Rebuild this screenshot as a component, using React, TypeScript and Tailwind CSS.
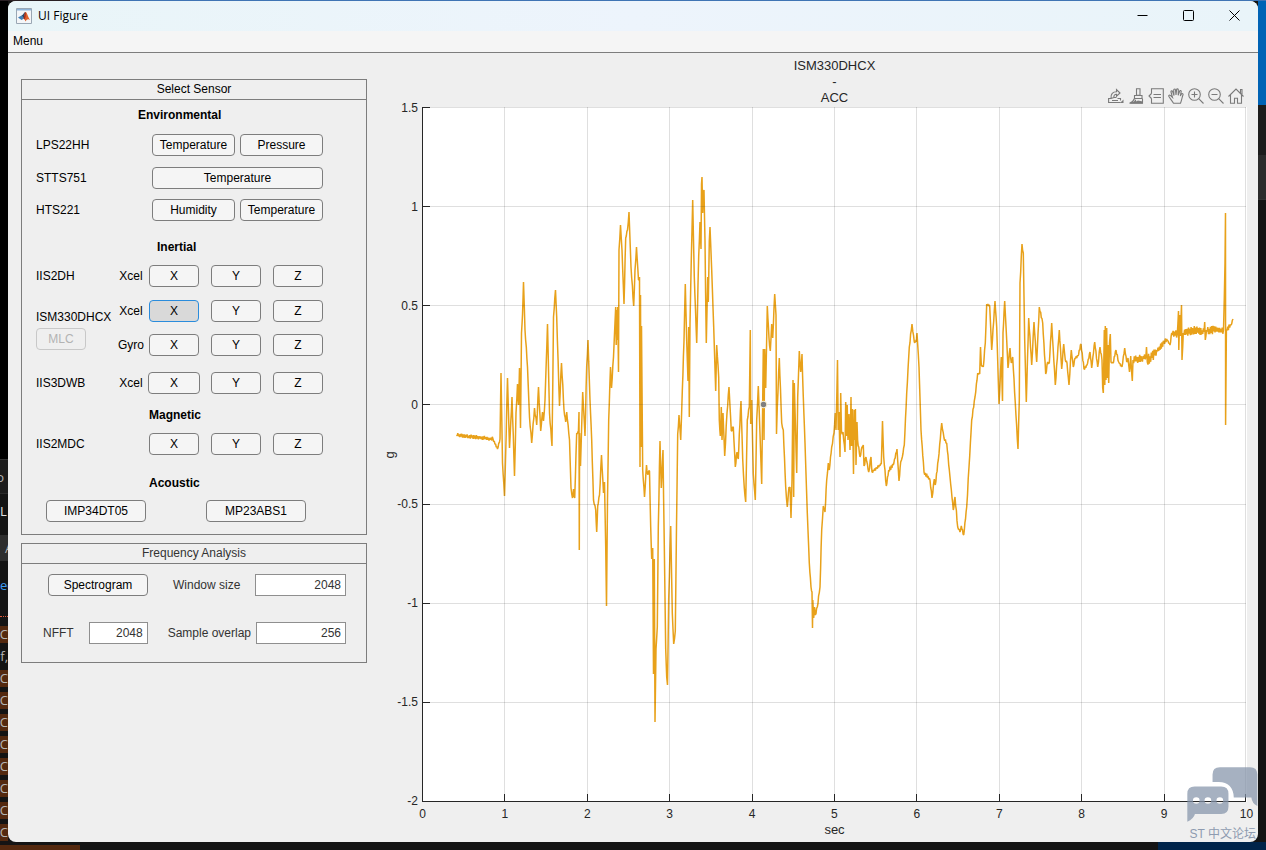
import React, { FC, ReactNode, useState } from 'react'

// [x, y, jitter?] in plot units, jitter sets how noisy the line up to that point is
const SIGNAL: number[][] = [
  [456.5, 435], [493, 439, 2], [497.5, 449], [500, 439], [501, 373], [502.5, 463], [504.5, 496], [505.5, 460],
  [507.5, 378], [509.5, 448], [512, 397], [514.5, 476], [516, 413], [517.5, 384], [518.5, 405], [519.5, 368],
  [520.5, 428], [521.5, 333], [522.5, 315], [523.5, 282], [525, 330], [527.5, 367], [529.5, 417], [531.7, 443],
  [534.5, 408], [536.7, 425], [538.5, 387], [540.7, 431], [542.5, 412], [543.5, 421], [545, 400], [547.5, 324],
  [549.5, 413], [552, 446], [553.5, 317], [555.5, 290], [556.7, 317], [559.5, 406], [561.5, 363], [564, 410],
  [565.7, 422], [566.7, 412], [569.5, 440], [571, 488], [572.5, 498], [573.5, 489], [574.7, 498], [576.7, 433],
  [578.4, 432], [579, 412], [579.3, 550], [579.6, 433], [580.5, 466], [582.7, 392], [585, 436], [586.7, 366],
  [588, 340], [590, 400], [591.7, 440], [593.5, 500], [595.7, 510], [596.7, 532], [597.7, 506], [599.5, 495],
  [601.5, 455], [603.5, 493], [604.5, 482], [605.7, 546], [606.5, 606], [607.5, 500], [608.7, 420], [610.5, 367],
  [611.5, 388], [613.5, 357], [615.7, 307], [616.2, 345], [616.7, 310], [617.2, 340], [617.7, 307], [618.5, 372],
  [619, 250], [620.5, 225], [622, 250], [624, 304], [625.7, 238], [627.5, 230], [629, 212], [631, 267],
  [633.7, 306], [635, 270], [636.5, 247], [638.5, 280], [639.5, 277], [640, 467], [640.5, 295], [641, 447],
  [641.5, 326], [642.7, 470], [644.5, 497], [646.5, 465], [647.5, 474], [649.5, 471], [650.7, 527], [651.7, 559],
  [652.7, 548], [653.5, 674], [654.3, 559], [655, 722], [656, 649], [657.3, 627], [658.3, 527], [660, 441],
  [661.3, 488], [663, 450], [664.3, 545], [665.7, 649], [666.7, 677], [667.5, 685], [668.7, 599], [670.7, 526],
  [672.3, 613], [673.7, 644], [675.3, 631], [676.5, 527], [677.7, 434], [679, 415], [680.7, 440], [682.3, 391],
  [684, 341], [685.3, 284], [686.7, 341], [688, 381], [688.7, 327], [689.3, 417], [690, 324], [691.3, 259],
  [692.7, 200], [694.3, 277], [696.7, 343], [698.7, 256], [700, 222], [701, 249], [701.5, 184], [702, 177],
  [702.7, 213], [703.3, 192], [704, 190], [705, 241], [706.3, 343], [707.7, 277], [708.3, 302], [709.3, 241],
  [710, 227], [711.7, 270], [713.7, 327], [715.7, 391], [716.7, 345], [718.7, 377], [719.3, 420], [720.3, 436],
  [721.3, 407], [722, 440], [723, 413], [724.7, 456], [727, 413], [729, 387], [731.3, 431], [733.3, 427],
  [735.3, 467], [737, 452], [738.3, 459], [739.3, 434], [741, 401], [742.7, 459], [744.3, 488], [745.7, 502],
  [747.3, 420], [749.3, 407], [750.3, 330], [750.7, 424], [751.7, 400], [753.3, 474], [755.3, 500], [756.7, 420],
  [758.3, 386], [760, 434], [761.7, 484], [763.3, 349], [764, 440], [764.7, 349], [765.7, 388], [767.3, 306],
  [769, 338], [770.3, 351], [771.7, 324], [772.7, 338], [774.7, 294], [776, 315], [776.5, 434], [777.3, 407],
  [779.3, 358], [781.7, 423], [783.3, 430], [785.7, 487], [787.3, 507], [789, 487], [790, 487], [791, 518],
  [792, 480], [793, 380], [793.7, 497], [794.3, 383], [796.7, 473], [797.7, 397], [799.3, 351], [800.7, 372],
  [802, 354], [803.3, 397], [805, 443], [807.3, 513], [809.3, 563], [811, 587], [812, 592], [812.5, 628],
  [812.8, 600], [813.7, 618], [814.5, 607], [815.3, 615], [817.3, 607], [820, 587], [821.7, 530], [823.3, 506],
  [825, 512], [826.7, 480], [828.3, 463], [829.3, 470], [831.7, 447], [834, 433], [835.3, 413], [836, 430],
  [837.5, 360], [838.2, 430], [839, 412], [840, 457], [840.7, 393], [841.5, 432, 6], [843, 432, 6], [845, 452],
  [845.7, 402], [846.4, 436], [847.2, 405], [848, 440], [849, 414], [850, 450], [851, 397], [851.6, 446],
  [852.5, 409], [853.5, 474], [854.3, 410], [855, 440], [855.4, 409], [856, 465], [857, 422], [857.6, 440],
  [860, 457], [862, 447], [863.3, 445], [864, 466], [866, 457], [868.7, 472], [871, 457], [872, 472],
  [876.7, 468, 2], [881.3, 464, 2], [882.5, 421], [883.7, 457], [886.3, 486], [888.7, 470], [893.3, 465, 2], [897, 449],
  [899, 481], [900.7, 462], [902.3, 457], [904.3, 445], [906.7, 393], [909.3, 347], [912, 324], [914.3, 342],
  [916, 342], [917, 333], [919, 367], [921, 430], [924, 472], [930, 480, 2], [932, 498], [934.3, 479],
  [935.3, 485], [938.3, 460], [941.7, 423], [944, 438], [946.7, 443], [950, 477], [953.3, 510], [955, 497],
  [957.7, 527], [960, 532], [961.3, 526], [963.7, 535], [966.7, 507], [969, 467], [971.7, 420], [975, 397],
  [977.7, 373], [979.7, 374], [980.5, 347], [981.3, 365], [983.3, 367], [985.3, 343], [986.7, 304], [989.7, 306],
  [991.7, 350], [995, 301], [996.7, 327], [999, 404], [1001.3, 357], [1002.5, 401], [1003, 333], [1004.7, 301],
  [1006.7, 340], [1008, 368], [1010, 348], [1011.3, 363], [1012.7, 357], [1015.3, 403], [1018, 449], [1019.3, 400],
  [1020, 283], [1022, 244], [1023.3, 253], [1024.7, 340], [1026.3, 402], [1028.7, 318], [1031.7, 365], [1034, 322],
  [1036.7, 362], [1039.3, 307], [1042.7, 323], [1045.7, 374], [1047.7, 362], [1049.3, 363], [1051.7, 323], [1055.3, 385],
  [1059.3, 330], [1061.7, 369], [1063.7, 344], [1065.3, 360], [1067, 363], [1069, 385], [1071.3, 350], [1073.3, 367],
  [1075, 358], [1078, 356], [1081, 344], [1084, 369], [1087, 365], [1090, 352], [1091.7, 368], [1094.7, 342],
  [1097.7, 367], [1100, 347], [1102, 360], [1102.7, 388], [1103.3, 393], [1104.3, 330], [1104.8, 385], [1105.3, 326],
  [1106, 380], [1106.7, 328], [1107.3, 378], [1108, 345], [1108.7, 383], [1109.5, 343], [1110.3, 334], [1111, 362],
  [1113, 363], [1116, 350], [1118.7, 362], [1122, 367], [1124.7, 348], [1126.7, 362], [1128, 358], [1129.5, 372],
  [1130.7, 356], [1132.3, 381], [1133, 360], [1141.7, 359, 4], [1146, 355, 4], [1146.5, 347], [1147.3, 362], [1156.7, 350, 6],
  [1164, 343, 3], [1166.7, 339, 3], [1170, 345, 2], [1171.7, 333], [1177.3, 334, 4], [1178.5, 311], [1178.8, 350],
  [1179.7, 315], [1180.3, 336], [1181.5, 305], [1182, 360], [1183.3, 333], [1193, 330, 4], [1204, 332, 4],
  [1204.7, 322], [1205.3, 340], [1206.5, 330], [1223.5, 330, 4], [1225, 263], [1225.5, 213], [1225.6, 425],
  [1226.4, 330], [1231, 325, 3], [1233, 319],
]

const toPath = (samples: number[][]) => {
  let seed = 7
  const rand = () => {
    seed = (seed * 16807) % 2147483647
    return seed / 2147483647
  }
  const points: string[] = []
  samples.forEach(([x, y, jitter = 1.5], i) => {
    if (i > 0) {
      const [px, py] = samples[i - 1]
      const steps = Math.round((x - px) * 1.5)
      for (let s = 1; s < steps; s++) {
        const side = s % 2 ? 1 : -1
        const t = s / steps
        points.push(`${(px + (x - px) * t).toFixed(1)},${(py + (y - py) * t + side * jitter * (0.3 + rand() * 0.8)).toFixed(1)}`)
      }
    }
    points.push(`${x},${y}`)
  })
  return points.join(' ')
}

const X_TICKS = ['0', '1', '2', '3', '4', '5', '6', '7', '8', '9', '10']
const Y_TICKS = ['1.5', '1', '0.5', '0', '-0.5', '-1', '-1.5', '-2']
const CODE_ROWS = ['xC', 'uf,', 'xC', 'xC', 'xC', 'xC', 'xC', 'xC', 'xC', 'xC']

const xAt = (i: number) => Math.round(422 + i * 82.4) + 0.5
const yAt = (i: number) => Math.round(107 + i * 99.15) + 0.5

const Btn: FC<{ children: ReactNode; className?: string; active?: boolean; disabled?: boolean; onClick?: () => void; label?: string }> = ({
  children,
  className = 'w-[50px]',
  active,
  disabled,
  onClick,
  label,
}) => {
  const look = disabled
    ? 'border-[#c8c8c8] text-[#b3b3b3]'
    : active
      ? 'border-[#2a8cdc] bg-[#d9d9d9] text-black'
      : 'border-[#7d7d7d] bg-[#f5f5f5] text-black hover:bg-[#e6e6e6]'
  return (
    <button
      type="button"
      disabled={disabled}
      aria-pressed={active}
      aria-label={label}
      onClick={onClick}
      className={`flex h-[22px] shrink-0 items-center justify-center rounded border leading-4 ${look} ${className}`}
    >
      {children}
    </button>
  )
}

const Panel: FC<{ title: string; children: ReactNode; className?: string }> = ({ title, children, className = '' }) => (
  <section className={`border border-[#7d7d7d] ${className}`}>
    <h2 className="h-5 border-b border-[#7d7d7d] text-center leading-[18px]">{title}</h2>
    {children}
  </section>
)

const Row: FC<{ name: string; children: ReactNode; className?: string }> = ({ name, children, className = '' }) => (
  <div className={`flex items-center ${className}`}>
    <span className="w-[82px] shrink-0">{name}</span>
    {children}
  </div>
)

const Axes: FC<{ sensor: string; kind: string; wide?: boolean; selected: string; onSelect: (id: string) => void }> = ({
  sensor,
  kind,
  wide,
  selected,
  onSelect,
}) => (
  <div className="flex flex-1 items-center justify-between">
    <span className="w-[26px] text-center whitespace-nowrap">{kind}</span>
    <div className="flex gap-3">
      {['X', 'Y', 'Z'].map((axis) => {
        const id = `${sensor} ${kind} ${axis}`
        return (
          <Btn
            key={axis}
            label={id}
            active={selected === id}
            onClick={() => onSelect(id)}
            className={wide && axis === 'X' ? '-mx-px w-[52px]' : 'w-[50px]'}
          >
            {axis}
          </Btn>
        )
      })}
    </div>
  </div>
)

const Tool: FC<{ label: string; children: ReactNode }> = ({ label, children }) => (
  <button type="button" aria-label={label} className="text-[#7a7a7a] hover:text-black">
    <svg className="block h-4 w-4" viewBox="0 0 16 16" fill="none" stroke="currentColor" strokeWidth="1.1">
      {children}
    </svg>
  </button>
)

const Toolbar: FC = () => (
  <div className="absolute right-[3px] bottom-[3px] flex gap-1">
    <Tool label="Export">
      <path d="M3 10.500H.6v4h12M9.500 10.500h3v2" />
      <path d="M3 10.500C2.500 6 5 3.800 8.500 3.800V1.500l3.500 3.500-3.500 3.200V6.200C6.500 6.200 5.500 8 6 9.500h2.500M3 10.500 6 9.500M4 12.500h6" />
      <path d="M15.500 11.500v3.500H12z" fill="currentColor" stroke="none" />
    </Tool>
    <Tool label="Brush">
      <path d="M8.500.8h3.500v6.500H8.500zM6.500 7.500h7.500v3H6.500z" />
      <path d="M6.500 10.500c-1 2.500-2.500 4-5 4.700h13v-4.700" />
      <path d="M2.500 15c3 0 4-1.200 5-2.500l.5 2 2-1.500 4 1v1z" fill="currentColor" />
    </Tool>
    <Tool label="Data tips">
      <path d="M3.500 5.500V.8h11.800v14.500H3.500v-4.800M3.500 5.500 1 8l2.500 2.500" />
      <path d="M5.500 6.500h7.500M5.500 9.500h7.500" />
    </Tool>
    <Tool label="Pan">
      <path d="M5.500 15.300C4 12.500 2 10.500.8 8.300c-.4-1 .8-1.600 1.600-.9L4.500 9.500 3 4c-.3-1.200 1.200-1.600 1.600-.5L6 7.500 5.700 2c0-1.300 1.700-1.300 1.800 0L8 7l.6-5.300c.2-1.200 1.800-1 1.700.2L10.200 7.200l1.400-4c.4-1.100 1.800-.7 1.600.4l-.9 4.400 1.200-2c.6-.9 1.900-.3 1.500.7-1 2.800-1.300 5.800-2.500 8.600z" />
    </Tool>
    <Tool label="Zoom in">
      <circle cx="6.500" cy="6.500" r="5.800" />
      <path d="M10.700 10.700 15.500 15.500M3.500 6.500h6M6.500 3.500v6" />
    </Tool>
    <Tool label="Zoom out">
      <circle cx="6.500" cy="6.500" r="5.800" />
      <path d="M10.700 10.700 15.500 15.500M3.500 6.500h6" />
    </Tool>
    <Tool label="Restore view">
      <path d="M.5 8.500 8 1l7.500 7.500M12.500 5.500V1.500h1.500v5.500M2.500 7v8.300h4v-5h3v5h4V7" />
    </Tool>
  </div>
)

const Plot: FC = () => (
  <svg
    className="h-full w-full bg-white"
    viewBox="422 107 825 695"
    preserveAspectRatio="none"
    fill="none"
    role="img"
    aria-label="Acceleration over time"
  >
    <polyline points={toPath(SIGNAL)} stroke="#e8a11a" strokeWidth="1.5" strokeLinejoin="bevel" />
    <g stroke="#262626" strokeOpacity="0.15" shapeRendering="crispEdges">
      {X_TICKS.slice(1).map((t, i) => (
        <path key={t} d={`M${i === 9 ? 1245.5 : xAt(i + 1)} 107V801`} />
      ))}
      {Y_TICKS.slice(0, -1).map((t, i) => (
        <path key={t} d={`M423 ${yAt(i)}H1246`} />
      ))}
    </g>
    <g stroke="#262626" shapeRendering="crispEdges">
      <path d="M422.5 107V801.500H1246" />
      {X_TICKS.map((t, i) => (
        <path key={t} d={`M${i === 10 ? 1245.5 : xAt(i)} 794V801`} />
      ))}
      {Y_TICKS.map((t, i) => (
        <path key={t} d={`M422 ${yAt(i)}H430`} />
      ))}
    </g>
    <circle cx="763.500" cy="404.500" r="3.800" fill="#f7efd2" />
    <circle cx="763.500" cy="404.500" r="2.700" fill="#7f7f7f" />
  </svg>
)

const Watermark: FC = () => (
  <div className="pointer-events-none absolute right-0 bottom-0 flex flex-col items-end text-[#8e9bb0]">
    <svg className="h-[57px] w-[73px]" viewBox="105 75 220 170" fill="#8393a9" fillOpacity="0.72">
      <path d="M188 125v-22q0-22 22-22h91q22 0 22 22v95q-16-8-18-26h-53c0-30-18-47-45-47z" />
      <path
        fillRule="evenodd"
        d="M134 139h80q22 0 22 22v39q0 22-22 22h-79q-4 15-23 23v-84q0-22 22-22zM129 181a10 10 0 1 0 20 0 10 10 0 1 0-20 0zM164 181a10 10 0 1 0 20 0 10 10 0 1 0-20 0zM200 181a10 10 0 1 0 20 0 10 10 0 1 0-20 0z"
      />
    </svg>
    <span className="mt-1 pr-[2px] font-['Liberation_Sans','Noto_Sans_CJK_SC',sans-serif] text-xs leading-4 whitespace-nowrap">ST 中文论坛</span>
  </div>
)

const TitleBar: FC = () => (
  <header className="flex h-[30px] items-center bg-linear-to-r from-[#e9f5f8] via-[#edf4fc] to-[#e9f4f9] pl-2 font-['Open_Sans',sans-serif]">
    <svg className="h-4 w-4" viewBox="0 0 16 16">
      <path d="M.5.500h15v15H.500z" fill="#f4f6f8" stroke="#9aa7b4" />
      <path d="M1 1h14v1.500H1z" fill="#8fb4d8" />
      <path d="M2 9.500 5.500 7.500 8 10.500 5.500 12z" fill="#3f7fb8" />
      <path d="M5.500 7.500C7.500 7 8 4 9.500 4L8 10.500z" fill="#26466b" />
      <path d="M9.500 4C11 4 12 9 14 12c-2-1.500-3-1-4.500 1.500C9 12 8.500 11 7.500 10.500 8.500 9 8.500 4 9.500 4z" fill="#e0602a" />
      <path d="M9.500 4c.5 2 .3 6-1 7.500-.5-.5-.5-.8-1-1C8.500 9 8.500 4 9.500 4z" fill="#a02c1c" />
    </svg>
    <h1 className="ml-[6px] text-xs">UI Figure</h1>
    <div className="mr-px ml-auto flex self-start">
      <button type="button" aria-label="Minimize" className="flex h-7 w-[46px] items-center justify-center">
        <svg className="h-[11px] w-[11px]" viewBox="0 0 11 11" stroke="#000" fill="none"><path d="M.5 5.500h10" /></svg>
      </button>
      <button type="button" aria-label="Maximize" className="flex h-7 w-[46px] items-center justify-center">
        <svg className="h-[11px] w-[11px]" viewBox="0 0 11 11" stroke="#000" fill="none"><rect x=".5" y=".5" width="10" height="10" rx="1" /></svg>
      </button>
      <button type="button" aria-label="Close" className="flex h-7 w-[46px] items-center justify-center">
        <svg className="h-[11px] w-[11px]" viewBox="0 0 11 11" stroke="#000" fill="none"><path d="M.5.500l10 10M10.500.500l-10 10" /></svg>
      </button>
    </div>
  </header>
)

// Slice of the editor that sits behind the window
const EditorEdge: FC = () => (
  <div className="flex w-2 shrink-0 flex-col overflow-hidden bg-black font-['Open_Sans',sans-serif] text-[13px] text-[#b4b4b4]" aria-hidden="true">
    <div className="h-[458px] shrink-0" />
    <div className="flex h-[34px] shrink-0 items-center justify-end border-t border-[#333333] bg-[#1c1c1c] pr-1">o</div>
    <div className="flex h-[42px] shrink-0 items-center border-t border-[#2b2b2b] bg-[#141414] pb-2 text-[#e0e0e0]">L</div>
    <div className="flex h-[26px] shrink-0 items-center bg-[#2e2e2e] pl-[5px]">A</div>
    <div className="flex h-[48px] shrink-0 items-center bg-[#141414] text-[#3f9bf0]">ed</div>
    <div className="flex h-[14px] shrink-0 flex-col justify-center bg-[#141414]">
      <div className="border-t border-dotted border-[#e0583a]" />
    </div>
    <div className="flex-1 bg-[#141414]">
      {CODE_ROWS.map((code, i) => (
        <div key={i} className="flex h-[22px] items-center">
          <span className={`flex h-[17px] w-2 items-center justify-end ${code === 'xC' ? 'bg-[#54290f]' : ''}`}>{code}</span>
        </div>
      ))}
    </div>
  </div>
)

const App: FC = () => {
  const [selected, setSelected] = useState('ISM330DHCX Xcel X')
  const axes = { selected, onSelect: setSelected }

  return (
    <div className="flex h-screen min-h-[720px] flex-col overflow-hidden bg-[#141414] font-['Liberation_Sans',Arial,sans-serif] text-xs leading-4 text-black">
      <div className="flex h-px shrink-0">
        <div className="w-[70px] bg-[#2a2024]" />
        <div className="flex-1 bg-[#3f74b4]" />
      </div>

      <div className="flex min-h-0 flex-1">
        <EditorEdge />

        <div className="relative flex min-w-0 flex-1 flex-col overflow-hidden rounded-lg bg-[#efefef]">
          <TitleBar />
          <nav className="flex h-[22px] shrink-0 items-center border-b border-[#7d7d7d] bg-[#f5f5f5] px-[5px] pb-[2px]">
            <button type="button">Menu</button>
          </nav>

          <main className="flex min-h-0 flex-1">
            <aside className="ml-[13px] w-[346px] shrink-0 pt-[26px]">
              <Panel title="Select Sensor">
                <div className="pt-[7px] pr-[43px] pb-3 pl-[14px]">
                  <h3 className="ml-[102px] font-bold">Environmental</h3>
                  <Row name="LPS22HH" className="mt-[11px]">
                    <div className="ml-auto flex gap-[5px]">
                      <Btn className="w-[83px]">Temperature</Btn>
                      <Btn className="w-[83px]">Pressure</Btn>
                    </div>
                  </Row>
                  <Row name="STTS751" className="mt-[11px]">
                    <Btn className="ml-auto w-[171px]">Temperature</Btn>
                  </Row>
                  <Row name="HTS221" className="mt-[10px]">
                    <div className="ml-auto flex gap-[5px]">
                      <Btn className="w-[83px]">Humidity</Btn>
                      <Btn className="w-[83px]">Temperature</Btn>
                    </div>
                  </Row>

                  <h3 className="mt-[18px] ml-[121px] font-bold">Inertial</h3>
                  <Row name="IIS2DH" className="mt-[10px]">
                    <Axes sensor="IIS2DH" kind="Xcel" {...axes} />
                  </Row>
                  <div className="mt-[13px] flex">
                    <div className="w-[82px] shrink-0 pt-[9px]">
                      <span className="block">ISM330DHCX</span>
                      <Btn disabled className="mt-[3px] w-[50px]">MLC</Btn>
                    </div>
                    <div className="flex flex-1 flex-col gap-3">
                      <div className="flex">
                        <Axes sensor="ISM330DHCX" kind="Xcel" {...axes} />
                      </div>
                      <div className="flex">
                        <Axes sensor="ISM330DHCX" kind="Gyro" {...axes} />
                      </div>
                    </div>
                  </div>
                  <Row name="IIS3DWB" className="mt-4">
                    <Axes sensor="IIS3DWB" kind="Xcel" wide {...axes} />
                  </Row>

                  <h3 className="mt-[13px] ml-[113px] font-bold">Magnetic</h3>
                  <Row name="IIS2MDC" className="mt-[10px]">
                    <Axes sensor="IIS2MDC" kind="" {...axes} />
                  </Row>

                  <h3 className="mt-5 ml-[113px] font-bold">Acoustic</h3>
                  <div className="mt-[9px] flex justify-between pr-[17px] pl-[10px]">
                    <Btn className="w-[100px]">IMP34DT05</Btn>
                    <Btn className="w-[100px]">MP23ABS1</Btn>
                  </div>
                </div>
              </Panel>

              <Panel title="Frequency Analysis" className="mt-2 text-[#333333]">
                <div className="flex items-center pt-[10px] pr-5 pl-[26px]">
                  <Btn className="w-[100px]">Spectrogram</Btn>
                  <label htmlFor="window-size" className="ml-[25px]">Window size</label>
                  <input id="window-size" defaultValue="2048" className="ml-auto h-[22px] w-[91px] border border-[#8f8f8f] bg-white pr-1 text-right" />
                </div>
                <div className="flex items-center pt-[26px] pr-5 pb-[18px] pl-[21px]">
                  <label htmlFor="nfft">NFFT</label>
                  <input id="nfft" defaultValue="2048" className="ml-[15px] h-[22px] w-[59px] border border-[#8f8f8f] bg-white pr-1 text-right" />
                  <label htmlFor="overlap" className="ml-5 whitespace-nowrap">Sample overlap</label>
                  <input id="overlap" defaultValue="256" className="ml-auto h-[22px] w-[90px] border border-[#8f8f8f] bg-white pr-1 text-right" />
                </div>
              </Panel>
            </aside>

            <section className="grid min-w-0 flex-1 grid-cols-[14px_25px_1fr] grid-rows-[auto_1fr_auto] pr-[11px] pb-1 pl-4 text-[#262626]">
              <div className="relative col-start-3 pt-[5px] pb-px text-center text-[13px] leading-4">
                <p>ISM330DHCX</p>
                <p>-</p>
                <p>ACC</p>
                <Toolbar />
              </div>

              <div className="col-start-1 row-start-2 flex items-center justify-center text-[13px]">
                <span className="-rotate-90">g</span>
              </div>
              <div className="row-start-2 flex flex-col justify-between pr-1">
                {Y_TICKS.map((t) => (
                  <span key={t} className="flex h-px items-center justify-end">{t}</span>
                ))}
              </div>
              <div className="row-start-2 min-h-0 min-w-0">
                <Plot />
              </div>

              <div className="col-start-3 pt-1">
                <div className="flex h-4 justify-between">
                  {X_TICKS.map((t) => (
                    <span key={t} className="flex w-px justify-center">{t}</span>
                  ))}
                </div>
                <p className="text-center text-[13px] leading-4">sec</p>
              </div>
            </section>
          </main>

          <Watermark />
        </div>

        <div className="flex w-2 shrink-0 flex-col">
          <div className="h-[104px] bg-[#0063b5]" />
          <div className="h-[50px] bg-[#1c1c1c]" />
          <div className="h-[44px] bg-[#2b2b2b]" />
          <div className="flex-1 border-t border-[#333333] bg-[#141414]" />
        </div>
      </div>

      <div className="flex h-2 shrink-0 items-end bg-[#141414]">
        <div className="h-[5px] w-20 bg-[#54290f]" />
        <div className="ml-auto h-2 w-[108px] bg-[#00244a]" />
      </div>
    </div>
  )
}

export default App
